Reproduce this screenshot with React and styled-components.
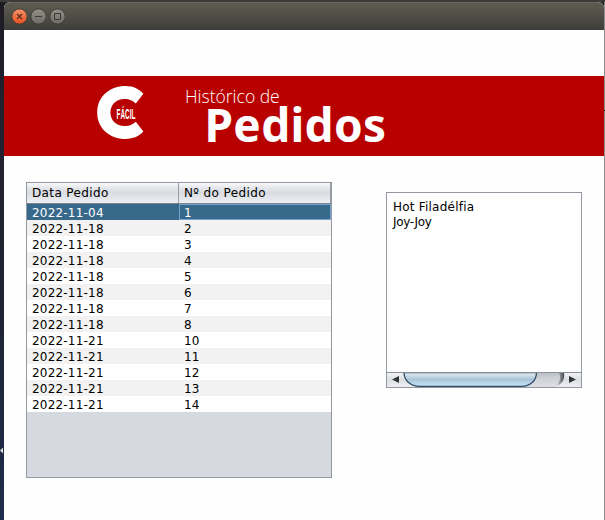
import React from "react";
import styled, { createGlobalStyle } from "styled-components";

const Global = createGlobalStyle`
  * { box-sizing: border-box; }
  body { margin: 0; overflow: hidden; background: #fff; }
`;

const Desktop = styled.div`
  position: relative;
  width: 605px;
  height: 520px;
  padding: 2px 0 0 4px;
  overflow: hidden;
  background: linear-gradient(#3c3b37 0 2px, transparent 2px),
    linear-gradient(90deg, transparent 604px, #8e8e8e 604px),
    linear-gradient(#1c1b24 0, #252230 120px, #1e2333 300px, #1e2d4c 520px);
  font-family: "DejaVu Sans", sans-serif;
  font-size: 12px;
  color: #000;
`;

const EdgeArrow = styled.svg`
  position: absolute;
  left: 0;
  top: 447px;
`;

const EdgeMark = styled.span`
  position: absolute;
  left: 604px;
  top: 110px;
  width: 1px;
  height: 1px;
  background: #000;
`;

const Window = styled.main`
  width: 600px;
  height: 518px;
  border-radius: 6px 6px 0 0;
  overflow: hidden;
  background: #fefefe;
`;

const TitleBar = styled.header`
  display: flex;
  align-items: center;
  gap: 3px;
  height: 28px;
  padding-left: 7px;
  background: linear-gradient(#5e5c51, #57554c 25%, #3e3d38);
  border-top: 1px solid #69675c;
`;

const Banner = styled.section`
  display: flex;
  height: 80px;
  margin-top: 46px;
  padding-left: 93px;
  background: #b90000;
`;

const Logo = styled.svg`
  flex: none;
  margin-top: 9px;
`;

const Heading = styled.h1`
  margin: 0 0 0 38px;
  padding-top: 11px;
  color: #fff;
  font-weight: 400;
  white-space: nowrap;
`;

const Overline = styled.span`
  display: block;
  font: 300 17.5px/19px "Open Sans", sans-serif;
`;

const Title = styled.span`
  display: block;
  margin-left: 19.5px;
  font: 700 46px/36px "Noto Sans", sans-serif;
  letter-spacing: 0.3px;
`;

const Content = styled.section`
  display: flex;
  align-items: flex-start;
  gap: 54px;
  padding: 26px 0 0 22px;
`;

const Table = styled.div`
  width: 306px;
  height: 296px;
  border: 1px solid #9297a1;
  background: #d6d9e0;
  letter-spacing: 0.2px;
`;

const HeadRow = styled.div`
  display: grid;
  grid-template-columns: 152px 152px;
  height: 21px;
  background: linear-gradient(#fafafb, #e4e6ea 25%, #d9dce1 50%, #dfe2e7 65%, #eef0f4);
  border-bottom: 1px solid #7d818b;
`;

const HeadCell = styled.div`
  padding-left: 5px;
  line-height: 21px;
  height: 20px;
  letter-spacing: 0.38px;
  border-right: 1px solid #9a9da5;
`;

const Row = styled.div`
  display: grid;
  grid-template-columns: 152px 152px;
  height: 16px;
  line-height: 19px;
  background: ${(p) => (p.$selected ? "#39698a" : p.$striped ? "#f2f2f2" : "#fff")};
  color: ${(p) => (p.$selected ? "#fff" : "#000")};
`;

const Cell = styled.div`
  padding-left: 5px;
  height: 16px;
  box-shadow: ${(p) => (p.$focused ? "inset 0 0 0 1px #73a4d1" : "none")};
`;

const ItemList = styled.div`
  display: flex;
  flex-direction: column;
  justify-content: space-between;
  width: 196px;
  height: 196px;
  margin-top: 10px;
  border: 1px solid #9297a1;
  background: #fff;
`;

const Items = styled.div`
  padding: 7px 6px;
  line-height: 15px;
`;

const Item = styled.div`
  letter-spacing: ${(p) => p.$tracking}px;
`;

const ScrollBar = styled.svg`
  display: block;
`;

const orders = [
  ["2022-11-04", 1], ["2022-11-18", 2], ["2022-11-18", 3], ["2022-11-18", 4],
  ["2022-11-18", 5], ["2022-11-18", 6], ["2022-11-18", 7], ["2022-11-18", 8],
  ["2022-11-21", 10], ["2022-11-21", 11], ["2022-11-21", 12],
  ["2022-11-21", 13], ["2022-11-21", 14],
];

function WindowButton({ kind }) {
  const close = kind === "close";
  const id = `face-${kind}`;
  return (
    <svg width="16" height="18" viewBox="0 0 16 18">
      <defs>
        <linearGradient id={id} x2="0" y2="1">
          <stop stopColor={close ? "#f7926d" : "#92918a"} />
          <stop offset="1" stopColor={close ? "#e8501c" : "#6b6a63"} />
        </linearGradient>
      </defs>
      <circle cx="8.5" cy="8.5" r="7.6" fill={`url(#${id})`} stroke="#3a3832" strokeWidth=".8" />
      {close && <path d="M6 6l5 5m0-5l-5 5" stroke="#5c3020" strokeWidth="1.4" />}
      {kind === "min" && <path d="M5 8.5h7" stroke="#3c3b37" />}
      {kind === "max" && <path d="M5.5 5.5h6v6h-6z" fill="none" stroke="#3c3b37" />}
    </svg>
  );
}

function BrandLogo() {
  return (
    <Logo width="50" height="58" viewBox="93 85 50 58">
      <path
        d="M139.4 93.7C133.8 88.8 130 86.1 121.4 86.1C106.5 86.1 93.2 96 93.2 112.4C93.2 129 106.6 138.9 121.4 138.9C130 138.9 134.3 136.4 139.4 131.6L131.8 121.8C128.5 124.4 125.8 126.1 120.5 126.1C112.2 126.1 106.4 120.2 106.4 112.5C106.4 104.8 112.2 99 120.5 99C125.8 99 128.5 100.7 131.8 103.4Z"
        fill="#fff"
      />
      <text
        transform="translate(112.6 119.2) scale(.44 1)"
        fontFamily="Liberation Sans, sans-serif" fontSize="14.5" fontWeight="700" fill="#fff"
      >
        FÁCIL
      </text>
    </Logo>
  );
}

function HorizontalScroll() {
  return (
    <ScrollBar width="194" height="15" viewBox="0 0 194 15">
      <defs>
        <linearGradient id="track" x2="0" y2="1">
          <stop stopColor="#b8bac1" /><stop offset=".4" stopColor="#cfd1d8" /><stop offset="1" stopColor="#dcdee4" />
        </linearGradient>
        <linearGradient id="button" x2="0" y2="1">
          <stop stopColor="#f3f4f5" /><stop offset=".5" stopColor="#dddfe3" /><stop offset="1" stopColor="#eceef1" />
        </linearGradient>
        <linearGradient id="thumb" x2="0" y2="1">
          <stop stopColor="#e8eff5" /><stop offset=".2" stopColor="#d0dfea" />
          <stop offset=".5" stopColor="#a9c4d9" /><stop offset="1" stopColor="#c9e2f5" />
        </linearGradient>
        <linearGradient id="shade"><stop stopColor="#55575e" stopOpacity="0" /><stop offset="1" stopColor="#44464c" /></linearGradient>
      </defs>
      <rect width="194" height="15" fill="url(#track)" />
      <path d="M0 0H17C17 8 22 13 31 15H0Z" fill="url(#button)" />
      <path d="M194 0H177C178 8 175 13 168 15H194Z" fill="url(#button)" />
      <path d="M171 0H177C178 8 175 12 169 14C173 10 175 4 171 0Z" fill="url(#shade)" />
      <path d="M17 .5H149.5C149.5 8 144 14.3 134 14.3H33C23 14.3 17 8 17 .5Z" fill="url(#thumb)" stroke="#304e68" strokeWidth="1.3" />
      <path d="M0 .5H194" stroke="#8a8f99" />
      <path d="M5 7.5L12 4V11Z M189 7.5L182 4V11Z" fill="#303236" />
    </ScrollBar>
  );
}

export default function App() {
  return (
    <Desktop>
      <Global />
      <Window>
        <TitleBar>
          <WindowButton kind="close" />
          <WindowButton kind="min" />
          <WindowButton kind="max" />
        </TitleBar>
        <Banner>
          <BrandLogo />
          <Heading>
            <Overline>Histórico de</Overline>
            <Title>Pedidos</Title>
          </Heading>
        </Banner>
        <Content>
          <Table>
            <HeadRow>
              <HeadCell>Data Pedido</HeadCell>
              <HeadCell>Nº do Pedido</HeadCell>
            </HeadRow>
            {orders.map(([date, number], i) => (
              <Row key={number} $selected={i === 0} $striped={i % 2 === 1}>
                <Cell>{date}</Cell>
                <Cell $focused={i === 0}>{number}</Cell>
              </Row>
            ))}
          </Table>
          <ItemList>
            <Items>
              <Item $tracking={0.22}>Hot Filadélfia</Item>
              <Item $tracking={-0.3}>Joy-Joy</Item>
            </Items>
            <HorizontalScroll />
          </ItemList>
        </Content>
      </Window>
      <EdgeArrow width="3" height="7" viewBox="0 0 3 7"><path d="M0 3.5L3 .5v6Z" fill="#ddd" /></EdgeArrow>
      <EdgeMark />
    </Desktop>
  );
}
